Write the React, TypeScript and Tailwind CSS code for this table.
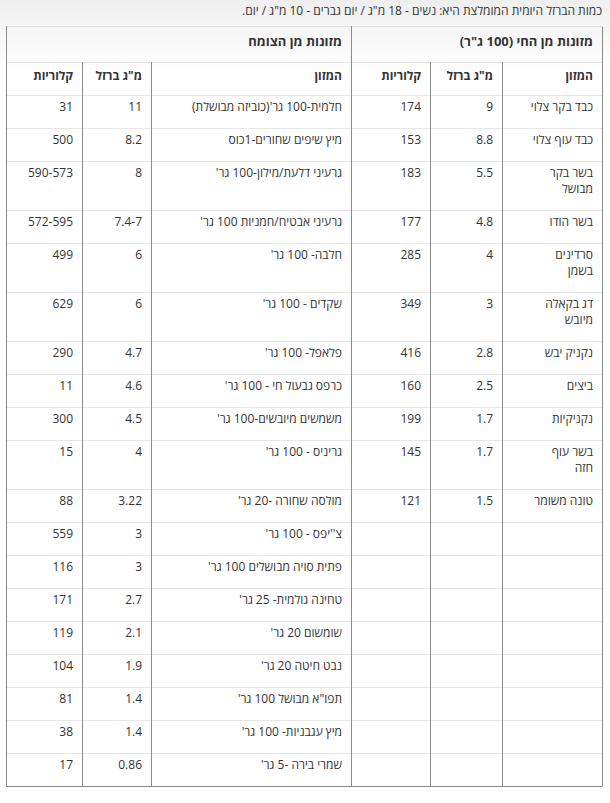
import React from "react";

type Row = [string[], string, string];

const animal: Row[] = [
  [["כבד בקר צלוי"], "9", "174"],
  [["כבד עוף צלוי"], "8.8", "153"],
  [["בשר בקר", "מבושל"], "5.5", "183"],
  [["בשר הודו"], "4.8", "177"],
  [["סרדינים", "בשמן"], "4", "285"],
  [["דג בקאלה", "מיובש"], "3", "349"],
  [["נקניק יבש"], "2.8", "416"],
  [["ביצים"], "2.5", "160"],
  [["נקניקיות"], "1.7", "199"],
  [["בשר עוף", "חזה"], "1.7", "145"],
  [["טונה משומר"], "1.5", "121"],
];

const plant: [string, string, string][] = [
  ["חלמית-100 גר'(כוביזה מבושלת)", "11", "31"],
  ["מיץ שיפים שחורים-1כוס", "8.2", "500"],
  ["גרעיני דלעת/מילון-100 גר'", "8", "590-573"],
  ["גרעיני אבטיח/חמניות 100 גר'", "7.4-7", "572-595"],
  ["חלבה- 100 גר'", "6", "499"],
  ["שקדים - 100 גר'", "6", "629"],
  ["פלאפל- 100 גר'", "4.7", "290"],
  ["כרפס גבעול חי - 100 גר'", "4.6", "11"],
  ["משמשים מיובשים-100 גר'", "4.5", "300"],
  ["גריניס - 100 גר'", "4", "15"],
  ["מולסה שחורה -20 גר'", "3.22", "88"],
  ["צ''יפס - 100 גר'", "3", "559"],
  ["פתית סויה מבושלים 100 גר'", "3", "116"],
  ["טחינה גולמית- 25 גר'", "2.7", "171"],
  ["שומשום 20 גר'", "2.1", "119"],
  ["נבט חיטה 20 גר'", "1.9", "104"],
  ["תפו\"א מבושל 100 גר'", "1.4", "81"],
  ["מיץ עגבניות- 100 גר'", "1.4", "38"],
  ["שמרי בירה -5 גר'", "0.86", "17"],
];

const cell =
  "border-x border-x-[#8a8a8a] border-t border-t-[#e6e6e6] pr-[9px] pt-[3px] pb-[13px] align-top text-right whitespace-nowrap";

const headCell =
  "border-x border-x-[#8a8a8a] border-t border-t-[#e6e6e6] pr-[9px] pt-[5px] pb-[11px] text-right align-top font-bold whitespace-nowrap";

const groupCell =
  "border-x border-x-[#8a8a8a] border-t border-t-[#e0e0e0] pr-[9px] pt-[5px] pb-[11px] text-right align-top text-[13px] leading-[19px] font-bold whitespace-nowrap";

export default function App() {
  return (
    <div
      dir="rtl"
      className="min-h-[803px] bg-[linear-gradient(#efefef,#ffffff_70px)] px-[7px] text-[12px] leading-[16px] text-[#333333]"
      style={{ fontFamily: '"Open Sans", "Liberation Sans", sans-serif' }}
    >
      <div className="pt-[3px] pb-[7px] pr-px">
        כמות הברזל היומית המומלצת היא: נשים - 18 מ"ג / יום גברים - 10 מ"ג / יום.
      </div>
      <table className="w-[596px] table-fixed border-collapse border-b border-b-[#8a8a8a]">
        <colgroup>
          <col className="w-[100px]" />
          <col className="w-[72px]" />
          <col className="w-[79px]" />
          <col className="w-[200px]" />
          <col className="w-[69px]" />
          <col className="w-[76px]" />
        </colgroup>
        <thead>
          <tr>
            <th colSpan={3} className={groupCell}>
              מזונות מן החי (100 ג"ר)
            </th>
            <th colSpan={3} className={groupCell}>
              מזונות מן הצומח
            </th>
          </tr>
          <tr>
            {["המזון", 'מ"ג ברזל', "קלוריות", "המזון", 'מ"ג ברזל', "קלוריות"].map((h, i) => (
              <th key={i} className={headCell}>
                {h}
              </th>
            ))}
          </tr>
        </thead>
        <tbody>
          {plant.map((p, i) => {
            const a = animal[i];
            return (
              <tr key={i}>
                <td className={cell}>
                  {a
                    ? a[0].map((line, j) => (
                        <div key={j}>{line}</div>
                      ))
                    : null}
                </td>
                <td className={cell}>{a ? a[1] : ""}</td>
                <td className={cell}>{a ? a[2] : ""}</td>
                <td className={cell}>{p[0]}</td>
                <td className={cell}>{p[1]}</td>
                <td className={cell}>{p[2]}</td>
              </tr>
            );
          })}
        </tbody>
      </table>
    </div>
  );
}
